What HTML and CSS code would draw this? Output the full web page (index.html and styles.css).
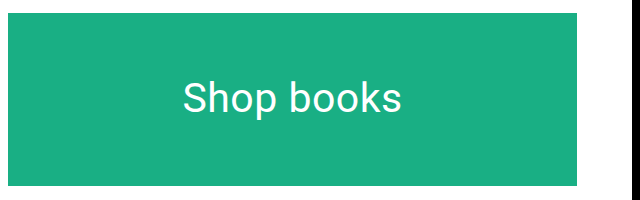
FILE: index.html
```html
<!DOCTYPE html>
<html lang="en">
<head>
    <meta charset="UTF-8">
    <title>Shop books</title>
    <link rel="stylesheet" href="styles.css">
</head>
<body>
    <div class="page">
        <a class="shop-btn" href="#">Shop books</a>
    </div>
</body>
</html>
```

FILE: styles.css
```css
* {
    margin: 0;
    padding: 0;
    box-sizing: border-box;
}

html {
    background-color: #000000;
}

body {
    width: 632px;
    height: 200px;
    background-color: #ffffff;
    font-family: Roboto, Arial, sans-serif;
}

.page {
    padding: 13px 0 0 8px;
}

.shop-btn {
    display: flex;
    align-items: center;
    justify-content: center;
    width: 569px;
    height: 173px;
    padding-bottom: 4px;
    background-color: #19af84;
    color: #ffffff;
    font-size: 41px;
    letter-spacing: 0.5px;
    text-decoration: none;
}
```
